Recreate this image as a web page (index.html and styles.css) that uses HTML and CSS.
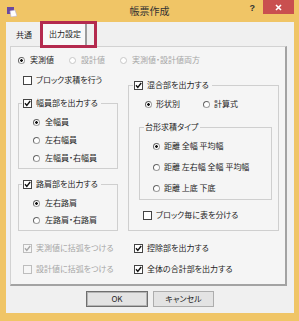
FILE: index.html
```html
<!DOCTYPE html>
<html>
<head>
    <title>帳票作成</title>
    <link rel="stylesheet" href="styles.css">
</head>
<body>
    <div class="window">
        <div class="titlebar">
            <div class="tb-left">
                <svg class="app-icon" width="10" height="10" viewBox="0 0 10 10">
                    <rect x="0" y="0" width="7" height="7" fill="#6b4aa0"/>
                    <path d="M3 4 L8 3 L10 9 L4 10 Z" fill="#fff" stroke="#b9b0cf" stroke-width="0.6"/>
                </svg>
            </div>
            <div class="title">帳票作成</div>
            <div class="tb-right">
                <span class="help">?</span>
                <span class="close">
                    <svg width="7" height="7" viewBox="0 0 7 7"><path d="M1 1 L6 6 M6 1 L1 6" stroke="#fff" stroke-width="1.6"/></svg>
                </span>
            </div>
        </div>

        <div class="client">
            <div class="tabs">
                <div class="tab">共通</div>
                <div class="tab-mark">
                    <div class="tab active">出力設定</div>
                </div>
            </div>

            <div class="panel">
                <div class="radio-row">
                    <span class="opt"><span class="rd on"></span>実測値</span>
                    <span class="opt off"><span class="rd"></span>設計値</span>
                    <span class="opt off"><span class="rd"></span>実測値・設計値両方</span>
                </div>

                <div class="columns">
                    <div class="col-left">
                        <div class="opt block-calc">
                            <svg class="cb" width="9" height="9" viewBox="0 0 9 9"><rect x="0.5" y="0.5" width="8" height="8" fill="#fff" stroke="#444"/></svg>
                            ブロック求積を行う
                        </div>

                        <fieldset class="group width-group">
                            <legend><span class="opt">
                                <svg class="cb" width="9" height="9" viewBox="0 0 9 9"><rect x="0.5" y="0.5" width="8" height="8" fill="#fff" stroke="#444"/><path d="M2 4.3 L3.8 6.4 L7.2 2" fill="none" stroke="#111" stroke-width="1.4"/></svg>
                                幅員部を出力する</span></legend>
                            <div class="group-body gap8">
                                <span class="opt"><span class="rd on"></span>全幅員</span>
                                <span class="opt"><span class="rd"></span>左右幅員</span>
                                <span class="opt"><span class="rd"></span>左幅員・右幅員</span>
                            </div>
                        </fieldset>

                        <fieldset class="group shoulder-group">
                            <legend><span class="opt">
                                <svg class="cb" width="9" height="9" viewBox="0 0 9 9"><rect x="0.5" y="0.5" width="8" height="8" fill="#fff" stroke="#444"/><path d="M2 4.3 L3.8 6.4 L7.2 2" fill="none" stroke="#111" stroke-width="1.4"/></svg>
                                路肩部を出力する</span></legend>
                            <div class="group-body gap7">
                                <span class="opt"><span class="rd on"></span>左右路肩</span>
                                <span class="opt"><span class="rd"></span>左路肩・右路肩</span>
                            </div>
                        </fieldset>

                        <div class="opt off bottom-first">
                            <svg class="cb" width="9" height="9" viewBox="0 0 9 9"><rect x="0.5" y="0.5" width="8" height="8" fill="#f6f6f6" stroke="#bdbdbd"/><path d="M2 4.3 L3.8 6.4 L7.2 2" fill="none" stroke="#a8a8a8" stroke-width="1.4"/></svg>
                            実測値に括弧をつける
                        </div>
                        <div class="opt off bottom-second">
                            <svg class="cb" width="9" height="9" viewBox="0 0 9 9"><rect x="0.5" y="0.5" width="8" height="8" fill="#f6f6f6" stroke="#bdbdbd"/></svg>
                            設計値に括弧をつける
                        </div>
                    </div>

                    <div class="col-right">
                        <fieldset class="group mixed-group">
                            <legend><span class="opt">
                                <svg class="cb" width="9" height="9" viewBox="0 0 9 9"><rect x="0.5" y="0.5" width="8" height="8" fill="#fff" stroke="#444"/><path d="M2 4.3 L3.8 6.4 L7.2 2" fill="none" stroke="#111" stroke-width="1.4"/></svg>
                                混合部を出力する</span></legend>
                            <div class="mixed-body">
                                <div class="shape-row">
                                    <span class="opt"><span class="rd on"></span>形状別</span>
                                    <span class="opt"><span class="rd"></span>計算式</span>
                                </div>

                                <fieldset class="group trapezoid-group">
                                    <legend class="plain">台形求積タイプ</legend>
                                    <div class="group-body trap-body">
                                        <span class="opt"><span class="rd on"></span>距離 全幅 平均幅</span>
                                        <span class="opt"><span class="rd"></span>距離 左右幅 全幅 平均幅</span>
                                        <span class="opt"><span class="rd"></span>距離 上底 下底</span>
                                    </div>
                                </fieldset>

                                <div class="opt split-table">
                                    <svg class="cb" width="9" height="9" viewBox="0 0 9 9"><rect x="0.5" y="0.5" width="8" height="8" fill="#fff" stroke="#444"/></svg>
                                    ブロック毎に表を分ける
                                </div>
                            </div>
                        </fieldset>

                        <div class="opt right-check bottom-first">
                            <svg class="cb" width="9" height="9" viewBox="0 0 9 9"><rect x="0.5" y="0.5" width="8" height="8" fill="#fff" stroke="#444"/><path d="M2 4.3 L3.8 6.4 L7.2 2" fill="none" stroke="#111" stroke-width="1.4"/></svg>
                            控除部を出力する
                        </div>
                        <div class="opt right-check bottom-second">
                            <svg class="cb" width="9" height="9" viewBox="0 0 9 9"><rect x="0.5" y="0.5" width="8" height="8" fill="#fff" stroke="#444"/><path d="M2 4.3 L3.8 6.4 L7.2 2" fill="none" stroke="#111" stroke-width="1.4"/></svg>
                            全体の合計部を出力する
                        </div>
                    </div>
                </div>
            </div>

            <div class="buttons">
                <button class="btn default">OK</button>
                <button class="btn">キャンセル</button>
            </div>
        </div>
    </div>
</body>
</html>
```

FILE: styles.css
```css
body {
    margin: 0;
    font-family: "Noto Sans CJK JP", "Noto Sans", sans-serif;
    font-size: 8px;
    line-height: 10px;
    color: #1e1e1e;
    font-feature-settings: "palt";
}
.window {
    width: 299px;
    height: 321px;
    background: #f0c566;
    display: flex;
    flex-direction: column;
}
.titlebar {
    height: 22px;
    display: grid;
    grid-template-columns: 1fr auto 1fr;
    align-items: start;
}
.tb-left {
    padding: 7px 0 0 7px;
}
.app-icon {
    display: block;
}
.title {
    font-size: 10px;
    line-height: 12px;
    padding-top: 5px;
    color: #333;
}
.tb-right {
    display: flex;
    justify-content: flex-end;
    padding-right: 5px;
}
.help {
    font-family: "Liberation Sans", sans-serif;
    font-weight: bold;
    font-size: 9px;
    line-height: 10px;
    padding-top: 3px;
    margin-right: 8px;
    color: #333;
}
.close {
    width: 31px;
    height: 14px;
    background: #c9504f;
    display: flex;
    align-items: center;
    justify-content: center;
}
.close svg {
    display: block;
}
.client {
    flex: 1;
    margin: 0 5px 8px 6px;
    background: #f0f0f0;
}
.tabs {
    height: 24px;
    display: flex;
    align-items: flex-end;
    padding-left: 4px;
}
.tab {
    width: 30px;
    height: 18px;
    box-sizing: border-box;
    padding: 2px 0 0 6px;
}
.tab-mark {
    width: 57px;
    height: 27px;
    box-sizing: border-box;
    border: 3px solid #b42a4e;
    margin-bottom: -2px;
    position: relative;
    z-index: 1;
    background: #f0f0f0;
}
.tab.active {
    width: 44px;
    height: 100%;
    padding: 5px 0 0 6px;
    background: #f8f8f8;
    border-right: 2px solid #9c9c9c;
}
.panel {
    margin-left: 4px;
    width: 277px;
    height: 240px;
    box-sizing: border-box;
    border: 1px solid #d2d2d2;
    border-right: 2px solid #a3a3a3;
    border-bottom: 2px solid #a3a3a3;
    background: #f5f5f5;
    padding: 8px 0 0 7px;
}
.opt {
    display: flex;
    align-items: center;
    height: 10px;
    white-space: nowrap;
}
.off {
    color: #a6a6a6;
}
.cb {
    display: block;
    flex: none;
    margin-right: 4px;
}
.rd {
    width: 7px;
    height: 7px;
    box-sizing: border-box;
    border-radius: 50%;
    border: 1px solid #a0a0a0;
    border-top-color: #666;
    border-left-color: #666;
    background: #fff;
    margin-right: 5px;
    flex: none;
}
.rd.on {
    background: radial-gradient(circle, #111 0 1px, #fff 1.6px);
}
.off .rd {
    border-color: #c8c8c8;
}
.radio-row {
    display: flex;
    gap: 15px;
}
.columns {
    display: grid;
    grid-template-columns: 100px 151px;
    column-gap: 10px;
}
.group {
    margin: 0;
    padding: 0;
    min-width: 0;
    border: 1px solid #cfcfcf;
}
.group legend {
    margin-left: 3px;
    padding: 0 3px 0 1px;
    line-height: 10px;
}
.group legend.plain {
    margin-left: 4px;
    padding: 0 2px 0 1px;
}
.group-body {
    display: flex;
    flex-direction: column;
    padding: 9px 0 5px 14px;
}
.gap8 {
    gap: 8px;
}
.gap7 {
    gap: 7px;
}
.block-calc {
    margin: 10px 0 0 5px;
}
.width-group {
    margin-top: 13px;
}
.shoulder-group {
    margin-top: 10px;
}
.col-left .bottom-first {
    margin-left: 5px;
}
.col-left .bottom-second {
    margin-left: 5px;
}
.bottom-first {
    margin-top: 12px;
}
.bottom-second {
    margin-top: 11px;
}
.mixed-group {
    margin-top: 15px;
}
.mixed-group legend {
    margin-left: 4px;
}
.mixed-body {
    padding: 9px 0 10px 0;
}
.shape-row {
    display: flex;
    gap: 23px;
    padding-left: 16px;
}
.shape-row .rd {
    margin-right: 4px;
}
.trapezoid-group {
    margin: 13px 6px 0 10px;
}
.trap-body {
    gap: 11px;
    padding: 9px 0 6px 13px;
}
.trap-body .rd {
    margin-right: 4px;
}
.split-table {
    margin: 10px 0 0 14px;
}
.right-check {
    margin-left: 6px;
}
.buttons {
    display: flex;
    justify-content: center;
    gap: 5px;
    margin-top: 5px;
}
.btn {
    width: 61px;
    height: 16px;
    padding: 0;
    font-family: "Noto Sans CJK JP", sans-serif;
    font-size: 8px;
    line-height: 10px;
    color: #1e1e1e;
    background: #e3e3e3;
    border: 1px solid #adadad;
    font-feature-settings: "palt";
}
.btn.default {
    width: 62px;
    border: 1px solid #6f6f6f;
    box-shadow: inset 0 0 0 1px #b5b5b5;
}
```
